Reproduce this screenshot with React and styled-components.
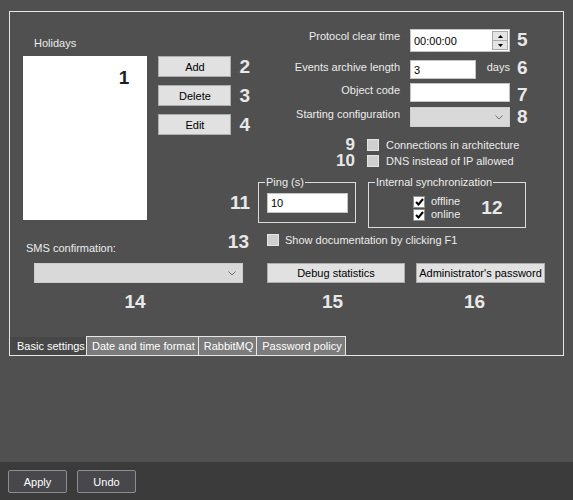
import React from "react";
import styled, { createGlobalStyle } from "styled-components";

const GlobalStyle = createGlobalStyle`
  html, body {
    margin: 0;
    background: #505050;
    font-family: "Liberation Sans", Arial, sans-serif;
    font-size: 11px;
    color: #ececec;
  }
  * { box-sizing: border-box; }
`;

const Page = styled.div`
  display: flex;
  flex-direction: column;
  height: 500px;
  width: 100%;
`;

const Main = styled.div`
  flex: 1;
  padding: 11px 9px 0 9px;
`;

const Panel = styled.div`
  height: 345px;
  border: 1px solid #e6e6e6;
  display: flex;
  flex-direction: column;
`;

const Top = styled.div`
  display: flex;
  padding: 17px 0 0 13px;
`;

const LeftCol = styled.div`
  width: 227px;
  display: flex;
  flex-direction: column;
`;

const Caption = styled.div`
  margin: 8px 0 6px 11px;
  line-height: 13px;
`;

const ListRow = styled.div`
  display: flex;
`;

const ListBox = styled.div`
  width: 125px;
  height: 164px;
  background: #fff;
  display: flex;
  justify-content: flex-end;
  align-items: flex-start;
  padding: 12px 18px 0 0;
`;

const Num = styled.div`
  font-weight: bold;
  font-size: 19px;
  line-height: 20px;
  color: ${(p) => (p.$dark ? "#1e1e1e" : "#e8e8e8")};
`;

const ButtonStack = styled.div`
  flex: 1;
  margin-left: 11px;
  height: 164px;
  display: flex;
  flex-direction: column;
  gap: 8px;
`;

const ButtonRow = styled.div`
  display: flex;
  align-items: center;
  gap: 8px;
`;

const GrayButton = styled.button`
  width: ${(p) => p.$w || 73}px;
  height: ${(p) => p.$h || 21}px;
  background: #e1e1e1;
  border: 1px solid #adadad;
  border-radius: 0;
  padding: 0;
  font-family: inherit;
  font-size: 11px;
  color: #000;
`;

const BottomNum = styled(Num)`
  margin-top: auto;
  margin-bottom: 6px;
  align-self: flex-end;
  line-height: 22px;
`;

const RightCol = styled.div`
  flex: 1;
  display: flex;
  flex-direction: column;
`;

const FieldRow = styled.div`
  display: flex;
  align-items: flex-start;
  height: ${(p) => p.$h}px;
  margin-top: ${(p) => p.$mt || 0}px;
`;

const FieldLabel = styled.div`
  width: 160px;
  padding-right: 10px;
  text-align: right;
  line-height: 14px;
`;

const Control = styled.div`
  width: 100px;
  height: 100%;
  display: flex;
  justify-content: space-between;
  align-items: flex-start;
`;

const TextBox = styled.div`
  width: ${(p) => p.$w || 100}px;
  height: 100%;
  background: #fff;
  border: 1px solid #c4c4c4;
  color: #000;
  display: flex;
  align-items: center;
  padding-left: 3px;
  font-size: 11px;
`;

const Spin = styled.div`
  margin-left: auto;
  margin-right: 1px;
  width: 16px;
  height: 19px;
  display: flex;
  flex-direction: column;
`;

const SpinHalf = styled.div`
  flex: 1;
  background: #e4e4e4;
  border: 1px solid #a8a8a8;
  display: flex;
  align-items: center;
  justify-content: center;
  & + & { border-top: none; }
`;

const Unit = styled.div`
  line-height: 14px;
`;

const FieldNum = styled(Num)`
  padding-left: 7px;
  margin-top: ${(p) => p.$mt || 0}px;
`;

const Combo = styled.div`
  width: ${(p) => p.$w || 100}px;
  height: ${(p) => p.$h || 20}px;
  background: #d9d9d9;
  border: 1px solid #cdcdcd;
  display: flex;
  align-items: center;
  justify-content: flex-end;
  padding-right: 6px;
  margin-left: ${(p) => p.$ml || 0}px;
`;

const CheckRow = styled.div`
  display: flex;
  align-items: center;
  height: 16px;
  margin-top: ${(p) => p.$mt || 0}px;
`;

const CheckNum = styled(Num)`
  width: 105px;
  text-align: right;
  font-size: 17px;
  line-height: 16px;
`;

const Box = styled.div`
  width: 12px;
  height: 12px;
  flex: none;
  margin-left: ${(p) => p.$ml || 0}px;
  background: ${(p) => (p.$checked ? "#ffffff" : "#cfcfcf")};
  border: 1px solid ${(p) => (p.$checked ? "#8f8f8f" : "#e4e4e4")};
  display: flex;
  align-items: center;
  justify-content: center;
`;

const CheckText = styled.span`
  margin-left: ${(p) => p.$ml || 7}px;
  line-height: 13px;
`;

const GroupRow = styled.div`
  display: flex;
  gap: 12px;
  margin-top: 7px;
  padding-left: 8px;
`;

const Group = styled.fieldset`
  margin: 0;
  width: ${(p) => p.$w}px;
  height: ${(p) => p.$h}px;
  border: 1px solid #dcdcdc;
  padding: 0 ${(p) => p.$px || 0}px;
  min-width: 0;
`;

const Legend = styled.legend`
  padding: 0 1px;
  margin-left: ${(p) => p.$ml}px;
  line-height: 13px;
  font-size: 11px;
`;

const PingInput = styled(TextBox)`
  width: 81px;
  height: 20px;
  margin-top: 4px;
`;

const SyncBody = styled.div`
  display: flex;
  align-items: center;
  padding-left: 44px;
  margin-top: 6px;
`;

const SyncList = styled.div`
  display: flex;
  flex-direction: column;
`;

const SyncItem = styled.div`
  display: flex;
  align-items: center;
  height: 13px;
`;

const SyncNum = styled(Num)`
  margin-left: 21px;
`;

const Lower = styled.div`
  padding-left: 16px;
  margin-top: 3px;
`;

const LowerRow = styled.div`
  display: flex;
  height: 22px;
`;

const LowerLeft = styled.div`
  width: 223px;
  display: flex;
  justify-content: space-between;
  align-items: flex-start;
`;

const SmsLabel = styled.div`
  padding-top: 11px;
  line-height: 13px;
`;

const LowerNum = styled(Num)`
  line-height: 22px;
`;

const DocCheck = styled.div`
  margin-left: 18px;
  height: 18px;
  display: flex;
  align-items: center;
`;

const ControlRow = styled.div`
  display: flex;
  margin-top: 10px;
`;

const ControlCol = styled.div`
  display: flex;
  flex-direction: column;
  align-items: center;
  margin-left: ${(p) => p.$ml}px;
`;

const ColNum = styled(Num)`
  margin-top: 8px;
  line-height: 22px;
  padding-right: ${(p) => p.$pr || 6}px;
`;

const TabBar = styled.div`
  margin-top: auto;
  display: flex;
  height: 19px;
`;

const Tab = styled.div`
  line-height: 18px;
  white-space: nowrap;
  color: #fff;
  ${(p) =>
    p.$active
      ? `
    width: 77px;
    padding-left: 7px;
    background: #474747;
    margin-top: 1px;
  `
      : `
    padding: 0 3px 0 5px;
    background: #7b7b7b;
    border: 1px solid #e6e6e6;
    border-bottom: none;
    & + & { margin-left: -1px; }
  `}
`;

const BottomBar = styled.div`
  height: 38px;
  background: #3c3b3c;
  display: flex;
  gap: 10px;
  padding: 8px 0 0 8px;
`;

const BarButton = styled.button`
  width: 59px;
  height: 23px;
  background: #48474c;
  border: 1px solid #8d8d8d;
  border-radius: 2px;
  color: #fff;
  font-family: inherit;
  font-size: 11px;
  padding: 0;
`;

function Chevron() {
  return (
    <svg width="8" height="5" viewBox="0 0 8 5">
      <path d="M0.5 0.5 L4 4 L7.5 0.5" fill="none" stroke="#6e6e6e" strokeWidth="1" />
    </svg>
  );
}

function Tick() {
  return (
    <svg width="9" height="8" viewBox="0 0 9 8">
      <path d="M1 4 L3.5 6.5 L8 1" fill="none" stroke="#000" strokeWidth="2" />
    </svg>
  );
}

function Arrow({ down }) {
  return (
    <svg width="5" height="3" viewBox="0 0 5 3">
      <path d={down ? "M0 0 L5 0 L2.5 3 Z" : "M0 3 L5 3 L2.5 0 Z"} fill="#000" />
    </svg>
  );
}

export default function App() {
  return (
    <Page>
      <GlobalStyle />
      <Main>
        <Panel>
          <Top>
            <LeftCol>
              <Caption>Holidays</Caption>
              <ListRow>
                <ListBox>
                  <Num $dark>1</Num>
                </ListBox>
                <ButtonStack>
                  <ButtonRow>
                    <GrayButton>Add</GrayButton>
                    <Num>2</Num>
                  </ButtonRow>
                  <ButtonRow>
                    <GrayButton>Delete</GrayButton>
                    <Num>3</Num>
                  </ButtonRow>
                  <ButtonRow>
                    <GrayButton>Edit</GrayButton>
                    <Num>4</Num>
                  </ButtonRow>
                  <BottomNum>11</BottomNum>
                </ButtonStack>
              </ListRow>
            </LeftCol>

            <RightCol>
              <FieldRow $h={23}>
                <FieldLabel>Protocol clear time</FieldLabel>
                <Control>
                  <TextBox>
                    00:00:00
                    <Spin>
                      <SpinHalf>
                        <Arrow />
                      </SpinHalf>
                      <SpinHalf>
                        <Arrow down />
                      </SpinHalf>
                    </Spin>
                  </TextBox>
                </Control>
                <FieldNum $mt={1}>5</FieldNum>
              </FieldRow>
              <FieldRow $h={19} $mt={8}>
                <FieldLabel>Events archive length</FieldLabel>
                <Control>
                  <TextBox $w={66}>3</TextBox>
                  <Unit>days</Unit>
                </Control>
                <FieldNum $mt={-2}>6</FieldNum>
              </FieldRow>
              <FieldRow $h={19} $mt={4}>
                <FieldLabel>Object code</FieldLabel>
                <Control>
                  <TextBox />
                </Control>
                <FieldNum $mt={2}>7</FieldNum>
              </FieldRow>
              <FieldRow $h={20} $mt={5}>
                <FieldLabel>Starting configuration</FieldLabel>
                <Control>
                  <Combo>
                    <Chevron />
                  </Combo>
                </Control>
                <FieldNum>8</FieldNum>
              </FieldRow>

              <CheckRow $mt={10}>
                <CheckNum>9</CheckNum>
                <Box $ml={12} />
                <CheckText>Connections in architecture</CheckText>
              </CheckRow>
              <CheckRow>
                <CheckNum>10</CheckNum>
                <Box $ml={12} />
                <CheckText>DNS instead of IP allowed</CheckText>
              </CheckRow>

              <GroupRow>
                <Group $w={98} $h={47} $px={8}>
                  <Legend $ml={-2}>Ping (s)</Legend>
                  <PingInput>10</PingInput>
                </Group>
                <Group $w={158} $h={52}>
                  <Legend $ml={6}>Internal synchronization</Legend>
                  <SyncBody>
                    <SyncList>
                      <SyncItem>
                        <Box $checked>
                          <Tick />
                        </Box>
                        <CheckText $ml={6}>offline</CheckText>
                      </SyncItem>
                      <SyncItem>
                        <Box $checked>
                          <Tick />
                        </Box>
                        <CheckText $ml={6}>online</CheckText>
                      </SyncItem>
                    </SyncList>
                    <SyncNum>12</SyncNum>
                  </SyncBody>
                </Group>
              </GroupRow>
            </RightCol>
          </Top>

          <Lower>
            <LowerRow>
              <LowerLeft>
                <SmsLabel>SMS confirmation:</SmsLabel>
                <LowerNum>13</LowerNum>
              </LowerLeft>
              <DocCheck>
                <Box />
                <CheckText $ml={6}>Show documentation by clicking F1</CheckText>
              </DocCheck>
            </LowerRow>
            <ControlRow>
              <ControlCol $ml={8}>
                <Combo $w={209}>
                  <Chevron />
                </Combo>
                <ColNum $pr={7}>14</ColNum>
              </ControlCol>
              <ControlCol $ml={24}>
                <GrayButton $w={138} $h={20}>Debug statistics</GrayButton>
                <ColNum $pr={7}>15</ColNum>
              </ControlCol>
              <ControlCol $ml={11}>
                <GrayButton $w={129} $h={20}>Administrator's password</GrayButton>
                <ColNum $pr={12}>16</ColNum>
              </ControlCol>
            </ControlRow>
          </Lower>

          <TabBar>
            <Tab $active>Basic settings</Tab>
            <Tab>Date and time format</Tab>
            <Tab>RabbitMQ</Tab>
            <Tab>Password policy</Tab>
          </TabBar>
        </Panel>
      </Main>
      <BottomBar>
        <BarButton>Apply</BarButton>
        <BarButton>Undo</BarButton>
      </BottomBar>
    </Page>
  );
}
